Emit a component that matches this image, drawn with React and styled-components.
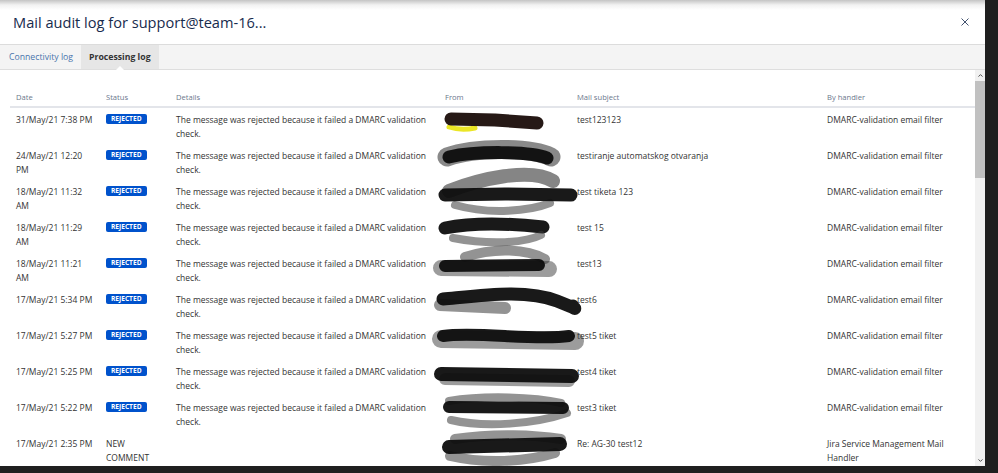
import React from "react";
import styled, { createGlobalStyle } from "styled-components";

const Global = createGlobalStyle`
  html, body { margin: 0; padding: 0; background: #1f1f1f; overflow: hidden; }
  body { font-family: "Open Sans", "Noto Sans", sans-serif; }
  * { box-sizing: border-box; }
`;

const Page = styled.div`
  width: 998px;
  height: 473px;
  background: #1f1f1f;
`;

const Modal = styled.div`
  width: 985px;
  height: 466px;
  background: #fff;
  display: flex;
  flex-direction: column;
  overflow: hidden;
`;

const Header = styled.div`
  height: 45px;
  flex: none;
  display: flex;
  align-items: center;
  justify-content: space-between;
  padding: 0 15px 1px 13px;
  background: linear-gradient(#c4c4c4 0px, #f2f2f2 5px, #fff 10px);
  border-bottom: 1px solid #dcdcdc;
`;

const Title = styled.h1`
  margin: 0;
  font-family: "Open Sans", sans-serif;
  font-weight: 400;
  font-size: 14.6px;
  color: #172b4d;
  letter-spacing: 0;
`;

const CloseButton = styled.button`
  border: 0;
  background: transparent;
  padding: 0;
  width: 10px;
  height: 10px;
  display: flex;
  align-items: center;
  justify-content: center;
  cursor: pointer;
`;

const TabBar = styled.div`
  height: 25px;
  flex: none;
  display: flex;
  padding-left: 1px;
  background: #f4f4f4;
  border-bottom: 1px solid #dedede;
`;

const Tab = styled.div`
  position: relative;
  display: flex;
  align-items: center;
  padding: 0 8px 1px 8px;
  font-size: 8.7px;
  font-weight: ${(p) => (p.$active ? 700 : 400)};
  color: ${(p) => (p.$active ? "#333" : "#4a74ad")};
  background: ${(p) => (p.$active ? "#e6e6e6" : "transparent")};
  &::after {
    content: "";
    display: ${(p) => (p.$active ? "block" : "none")};
    position: absolute;
    left: 50%;
    bottom: -1px;
    margin-left: -4px;
    border-left: 4px solid transparent;
    border-right: 4px solid transparent;
    border-bottom: 4px solid #fff;
  }
`;

const Body = styled.div`
  flex: 1;
  display: flex;
  min-height: 0;
`;

const TableArea = styled.div`
  flex: 1;
  padding: 19px 0 0 10px;
  overflow: hidden;
`;

const Grid = styled.div`
  display: grid;
  grid-template-columns: 90px 70px 269px 132px 250px 154px;
`;

const HeadCell = styled.div`
  font-size: 7.6px;
  line-height: 12px;
  color: #6b778c;
  padding: 2px 6px 3px 6px;
  border-bottom: 2px solid #e3e5ea;
`;

const Cell = styled.div`
  font-size: 8.5px;
  line-height: 14px;
  color: #333;
  padding: 5px ${(p) => p.$pr ?? 6}px 3px 6px;
  min-height: 36px;
`;

const Badge = styled.span`
  display: inline-block;
  margin-top: 1px;
  background: #0052cc;
  color: #fff;
  font-weight: 700;
  font-size: 6.6px;
  line-height: 10px;
  height: 10px;
  padding: 0 5px;
  border-radius: 2px;
  vertical-align: top;
`;

const RedactSvg = styled.svg`
  display: block;
  margin: -8px 0 -4px -10px;
  overflow: visible;
`;

const ScrollTrack = styled.div`
  width: 10px;
  flex: none;
  background: #f1f1f1;
  display: flex;
  flex-direction: column;
`;

const ScrollArrow = styled.div`
  height: 11px;
  display: flex;
  align-items: center;
  justify-content: center;
`;

const Thumb = styled.div`
  height: 97px;
  background: #c1c1c1;
`;

const Spacer = styled.div`
  flex: 1;
`;

const K = "#0d0d0d";
const G = "#3a3a3a";
const blobs = [
  [
    { d: "M14 22 Q26 26 40 23", w: 5, o: 0.85, c: "#e8e200" },
    { d: "M16 14 L60 15 L102 18", w: 13, o: 0.95, c: "#1a0d0a" },
  ],
  [
    { d: "M12 16 C40 6, 95 6, 116 16", w: 19, o: 0.6, c: G },
    { d: "M14 16 C40 10, 95 10, 112 17", w: 13, o: 0.95, c: K },
  ],
  [
    { d: "M14 14 C45 2, 95 -10, 118 4", w: 14, o: 0.62, c: G },
    { d: "M20 28 C55 38, 95 34, 115 26", w: 8, o: 0.55, c: G },
    { d: "M10 18 L70 17 L136 18", w: 13, o: 0.95, c: K },
  ],
  [
    { d: "M10 15 C40 9, 80 11, 108 14", w: 13, o: 0.95, c: K },
    { d: "M18 25 C55 32, 90 30, 106 22", w: 8, o: 0.55, c: G },
  ],
  [
    { d: "M30 8 C60 -2, 92 0, 110 10", w: 10, o: 0.55, c: G },
    { d: "M6 19 L114 20", w: 16, o: 0.5, c: G },
    { d: "M10 17 L104 16", w: 12, o: 0.95, c: K },
  ],
  [
    { d: "M5 20 L70 23", w: 12, o: 0.55, c: G },
    { d: "M8 14 C50 10, 92 4, 122 16 S134 22, 138 21", w: 13, o: 0.95, c: K },
  ],
  [
    { d: "M6 18 L140 20", w: 18, o: 0.5, c: G },
    { d: "M8 15 C40 10, 100 20, 134 15", w: 12, o: 0.95, c: K },
  ],
  [
    { d: "M10 22 L134 24", w: 12, o: 0.5, c: G },
    { d: "M6 17 L137 19", w: 14, o: 0.95, c: K },
  ],
  [
    { d: "M14 8 C50 2, 100 4, 126 10", w: 8, o: 0.55, c: G },
    { d: "M16 27 C50 35, 100 31, 132 20", w: 8, o: 0.55, c: G },
    { d: "M14 14 L128 15", w: 12, o: 0.95, c: K },
  ],
  [
    { d: "M20 10 C60 4, 100 6, 126 10", w: 10, o: 0.55, c: G },
    { d: "M15 27 C50 35, 90 33, 120 24", w: 10, o: 0.55, c: G },
    { d: "M14 18 L125 15", w: 14, o: 0.95, c: K },
  ],
];

function Redaction({ variant }) {
  return (
    <RedactSvg width="145" height="40" viewBox="0 0 145 40" aria-hidden="true">
      {blobs[variant].map((s, i) => (
        <path
          key={i}
          d={s.d}
          fill="none"
          stroke={s.c}
          strokeOpacity={s.o}
          strokeWidth={s.w}
          strokeLinecap="round"
          strokeLinejoin="round"
        />
      ))}
    </RedactSvg>
  );
}

const DETAIL = "The message was rejected because it failed a DMARC validation check.";
const FILTER = "DMARC-validation email filter";

const rows = [
  { date: "31/May/21 7:38 PM", subject: "test123123" },
  { date: "24/May/21 12:20 PM", subject: "testiranje automatskog otvaranja" },
  { date: "18/May/21 11:32 AM", subject: "test tiketa 123" },
  { date: "18/May/21 11:29 AM", subject: "test 15" },
  { date: "18/May/21 11:21 AM", subject: "test13" },
  { date: "17/May/21 5:34 PM", subject: "test6" },
  { date: "17/May/21 5:27 PM", subject: "test5 tiket" },
  { date: "17/May/21 5:25 PM", subject: "test4 tiket" },
  { date: "17/May/21 5:22 PM", subject: "test3 tiket" },
  {
    date: "17/May/21 2:35 PM",
    status: "NEW COMMENT",
    details: "",
    subject: "Re: AG-30 test12",
    handler: "Jira Service Management Mail Handler",
  },
];

export default function App() {
  return (
    <Page>
      <Global />
      <Modal>
        <Header>
          <Title>Mail audit log for support@team-16...</Title>
          <CloseButton aria-label="Close">
            <svg width="8" height="8" viewBox="0 0 8 8">
              <path d="M0.5 0.5 L7.5 7.5 M7.5 0.5 L0.5 7.5" stroke="#42526e" strokeWidth="1" fill="none" />
            </svg>
          </CloseButton>
        </Header>
        <TabBar>
          <Tab>Connectivity log</Tab>
          <Tab $active>Processing log</Tab>
        </TabBar>
        <Body>
          <TableArea>
            <Grid>
              <HeadCell>Date</HeadCell>
              <HeadCell>Status</HeadCell>
              <HeadCell>Details</HeadCell>
              <HeadCell>From</HeadCell>
              <HeadCell>Mail subject</HeadCell>
              <HeadCell>By handler</HeadCell>
              {rows.map((r, i) => (
                <React.Fragment key={i}>
                  <Cell $pr={5}>{r.date}</Cell>
                  <Cell>{r.status ? r.status : <Badge>REJECTED</Badge>}</Cell>
                  <Cell>{r.details !== undefined ? r.details : DETAIL}</Cell>
                  <Cell>
                    <Redaction variant={i} />
                  </Cell>
                  <Cell>{r.subject}</Cell>
                  <Cell>{r.handler || FILTER}</Cell>
                </React.Fragment>
              ))}
            </Grid>
          </TableArea>
          <ScrollTrack>
            <ScrollArrow>
              <svg width="5" height="3" viewBox="0 0 5 3">
                <path d="M0.5 2.6 L2.5 0.6 L4.5 2.6" stroke="#505050" strokeWidth="1" fill="none" />
              </svg>
            </ScrollArrow>
            <Thumb />
            <Spacer />
            <ScrollArrow>
              <svg width="5" height="3" viewBox="0 0 5 3">
                <path d="M0.5 0.4 L2.5 2.4 L4.5 0.4" stroke="#505050" strokeWidth="1" fill="none" />
              </svg>
            </ScrollArrow>
          </ScrollTrack>
        </Body>
      </Modal>
    </Page>
  );
}
